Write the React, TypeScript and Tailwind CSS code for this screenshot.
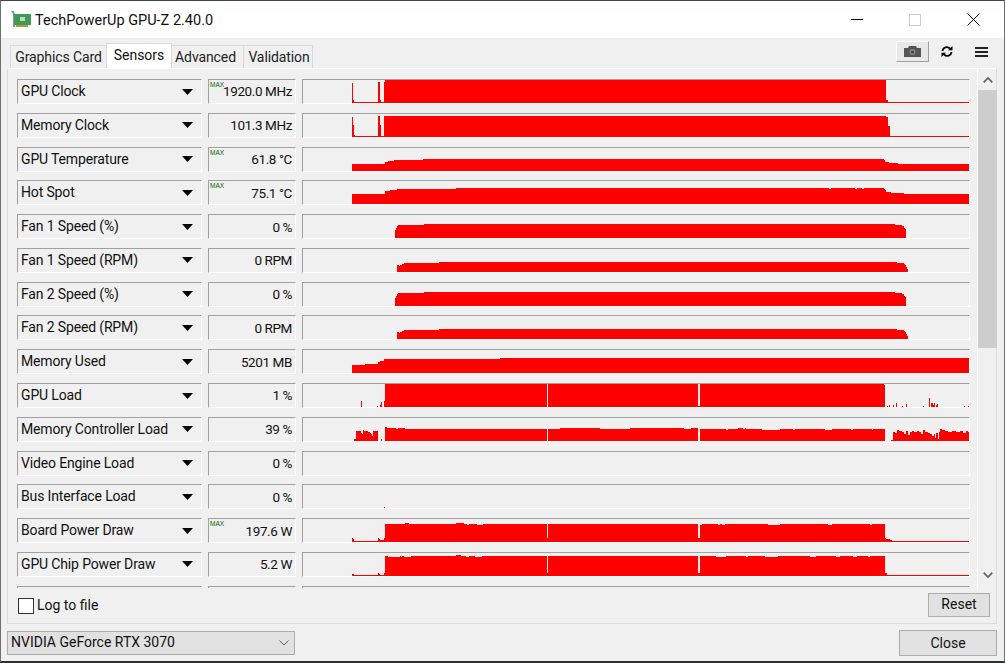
import React from 'react'

type Step = [number, number]

const PLOT_H = 23
const PLOT_LEFT = 302

const fanA: Step[] = [[395, 8], [396, 10], [397, 12], [398, 13], [424, 14], [895, 13], [902, 12], [904, 10], [905, 9], [906, 0]]
const fanB: Step[] = [[397, 7], [399, 6], [400, 7], [402, 8], [404, 9], [439, 10], [897, 9], [904, 8], [905, 7], [906, 5], [907, 3], [908, 0]]

const sensors: { name: string; value: string; max?: boolean; steps: Step[] }[] = [
  { name: 'GPU Clock', value: '1920.0 MHz', max: true, steps: [[352, 20], [353, 3], [354, 1], [378, 21], [380, 3], [381, 1], [384, 21], [385, 23], [886, 3], [888, 1], [969, 0]] },
  { name: 'Memory Clock', value: '101.3 MHz', steps: [[352, 20], [353, 12], [354, 2], [355, 1], [378, 21], [380, 12], [381, 1], [384, 21], [886, 20], [888, 11], [890, 1], [969, 0]] },
  { name: 'GPU Temperature', value: '61.8 °C', max: true, steps: [[352, 7], [385, 9], [388, 10], [394, 11], [423, 12], [884, 11], [885, 9], [889, 8], [898, 7], [969, 0]] },
  { name: 'Hot Spot', value: '75.1 °C', max: true, steps: [[352, 10], [385, 13], [390, 14], [397, 15], [456, 16], [829, 15], [831, 16], [855, 15], [857, 16], [862, 15], [864, 16], [884, 15], [885, 14], [886, 12], [891, 11], [904, 10], [969, 0]] },
  { name: 'Fan 1 Speed (%)', value: '0 %', steps: fanA },
  { name: 'Fan 1 Speed (RPM)', value: '0 RPM', steps: fanB },
  { name: 'Fan 2 Speed (%)', value: '0 %', steps: fanA },
  { name: 'Fan 2 Speed (RPM)', value: '0 RPM', steps: fanB },
  { name: 'Memory Used', value: '5201 MB', steps: [[352, 8], [365, 9], [378, 11], [380, 12], [384, 14], [500, 15], [969, 0]] },
  { name: 'GPU Load', value: '1 %', steps: [[361, 6], [362, 0], [377, 1], [378, 0], [380, 2], [381, 5], [382, 0], [384, 6], [385, 23], [547, 0], [548, 23], [698, 1], [700, 23], [884, 22], [885, 0], [887, 1], [888, 0], [889, 2], [890, 0], [893, 2], [894, 0], [896, 4], [897, 0], [902, 1], [903, 0], [906, 3], [907, 0], [923, 1], [924, 0], [929, 9], [930, 0], [931, 4], [933, 2], [934, 4], [935, 0], [936, 2], [937, 3], [938, 0], [964, 1], [965, 0], [968, 1], [969, 0]] },
  { name: 'Memory Controller Load', value: '39 %', steps: [[354, 2], [356, 10], [361, 8], [362, 7], [363, 11], [364, 10], [368, 9], [370, 8], [371, 7], [372, 5], [373, 10], [378, 0], [381, 2], [382, 0], [385, 14], [387, 13], [396, 12], [398, 13], [405, 12], [547, 0], [548, 12], [560, 13], [600, 12], [630, 13], [680, 13], [684, 12], [691, 13], [698, 0], [700, 12], [726, 11], [728, 12], [738, 13], [743, 12], [745, 13], [746, 12], [762, 11], [780, 12], [793, 11], [795, 12], [825, 11], [832, 12], [851, 11], [853, 12], [872, 11], [873, 12], [885, 0], [891, 1], [893, 9], [895, 8], [897, 11], [899, 10], [902, 9], [904, 7], [906, 10], [908, 6], [910, 9], [912, 10], [914, 9], [917, 10], [919, 9], [921, 7], [923, 11], [925, 9], [928, 8], [930, 7], [932, 5], [934, 7], [935, 3], [936, 8], [938, 2], [939, 9], [940, 12], [942, 11], [945, 10], [948, 9], [952, 10], [956, 9], [960, 10], [963, 8], [966, 10], [968, 9], [969, 0]] },
  { name: 'Video Engine Load', value: '0 %', steps: [] },
  { name: 'Bus Interface Load', value: '0 %', steps: [[384, 1], [385, 0]] },
  { name: 'Board Power Draw', value: '197.6 W', max: true, steps: [[352, 4], [353, 3], [354, 1], [378, 4], [379, 3], [380, 2], [384, 4], [385, 18], [405, 19], [409, 18], [456, 19], [464, 18], [467, 17], [469, 18], [477, 17], [483, 18], [547, 4], [548, 18], [698, 4], [700, 17], [702, 18], [718, 17], [720, 18], [722, 17], [725, 18], [768, 17], [780, 18], [828, 17], [832, 18], [870, 17], [872, 18], [885, 4], [886, 3], [890, 2], [892, 1], [969, 0]] },
  { name: 'GPU Chip Power Draw', value: '5.2 W', steps: [[352, 2], [354, 1], [378, 3], [379, 2], [380, 1], [384, 3], [385, 20], [388, 19], [400, 20], [401, 19], [402, 20], [404, 19], [411, 20], [456, 21], [461, 20], [466, 19], [469, 20], [475, 19], [482, 20], [547, 3], [548, 20], [698, 3], [700, 20], [716, 19], [726, 20], [746, 19], [748, 20], [765, 19], [778, 20], [810, 19], [816, 20], [836, 19], [840, 20], [853, 19], [857, 20], [868, 19], [870, 20], [885, 3], [887, 1], [969, 0]] },
  { name: '', value: '', steps: [] },
]

function plotPath(steps: Step[]) {
  let d = ''
  for (let i = 0; i < steps.length - 1; i++) {
    const [x, h] = steps[i]
    const w = steps[i + 1][0] - x
    if (h > 0) d += `M${x - PLOT_LEFT} ${PLOT_H - h}h${w}v${h}h-${w}z`
  }
  return d
}

function Graph({ steps }: { steps: Step[] }) {
  return (
    <div className="w-[668px] h-[25px] border-t border-l border-[#a0a0a0] border-b-white border-r-white border-b border-r bg-[#f0f0f0] shrink-0">
      <svg width={667} height={PLOT_H} viewBox={`1 0 667 ${PLOT_H}`} shapeRendering="crispEdges" className="block">
        <path d={plotPath(steps)} fill="#ff0000" />
      </svg>
    </div>
  )
}

function Arrow() {
  return (
    <svg width="11" height="6" viewBox="0 0 11 6" className="shrink-0">
      <path d="M0 0h11L5.5 6z" fill="#000" />
    </svg>
  )
}

function SensorRow({ name, value, max, steps }: { name: string; value: string; max?: boolean; steps: Step[] }) {
  return (
    <div className="flex h-[25px] shrink-0">
      <div className="w-[185px] h-[25px] border-t border-l border-[#a0a0a0] border-b-white border-r-white border-b border-r flex items-center justify-between pl-[3px] pr-[8px] text-[14px] tracking-[-0.15px] text-[#111]">
        <span>{name}</span>
        {name && <Arrow />}
      </div>
      <div className="relative ml-[6px] w-[88px] h-[25px] border-t border-l border-[#a0a0a0] border-b-white border-r-white border-b border-r flex items-center justify-end pr-[3px] text-[13.5px] tracking-[-0.4px] text-[#111]">
        {max && <span className="absolute left-[1px] top-[1px] text-[6.5px] leading-[7px] tracking-normal font-['Liberation_Sans'] text-[#006400]">MAX</span>}
        <span>{value}</span>
      </div>
      <div className="ml-[6px]">
        <Graph steps={steps} />
      </div>
    </div>
  )
}

function Tab({ label, active, className }: { label: string; active?: boolean; className: string }) {
  return (
    <div
      className={
        active
          ? `h-[25px] bg-white border border-b-0 border-[#d9d9d9] flex items-start justify-center pt-[1px] text-[14px] text-[#111] relative z-10 ${className}`
          : `h-[23px] bg-[#f0f0f0] border border-b-0 border-[#d9d9d9] -ml-px flex items-center justify-center text-[14px] tracking-[-0.1px] text-[#222] ${className}`
      }
    >
      {label}
    </div>
  )
}

export default function App() {
  return (
    <div className="w-[1005px] h-[663px] flex flex-col bg-[#f0f0f0] border-l border-r border-[#6f6f6f] border-t-[#3a4a44] border-t border-b-2 border-b-[#26332f] overflow-hidden font-['Roboto','Liberation_Sans',sans-serif]">
      {/* title bar */}
      <div className="h-[37px] bg-white flex items-center shrink-0">
        <svg width="20" height="17" viewBox="0 0 20 17" className="ml-[10px] shrink-0">
          <path d="M0 0h3l1 3v13H2V3z" fill="#8a9a90" />
          <rect x="3" y="3" width="17" height="11" fill="#3f9a55" />
          <rect x="9" y="6" width="5" height="4" fill="#c5d6c8" />
          <rect x="5" y="14" width="12" height="2" fill="#b09a40" />
        </svg>
        <span className="ml-[4px] pt-[2px] text-[14.5px] text-[#111]">TechPowerUp GPU-Z 2.40.0</span>
        <div className="ml-auto flex items-center">
          <div className="w-[12px] h-px bg-black" />
          <div className="ml-[46px] w-[12px] h-[12px] border border-[#cccccc]" />
          <svg width="13" height="13" viewBox="0 0 13 13" className="ml-[46px] mr-[24px]">
            <path d="M.5.5l12 12M12.5.5l-12 12" stroke="#000" strokeWidth="1" fill="none" />
          </svg>
        </div>
      </div>

      {/* tabs and tool icons */}
      <div className="h-[30px] flex items-end shrink-0">
        <div className="flex items-end pl-[9px]">
          <Tab label="Graphics Card" className="w-[97px] ml-0" />
          <Tab label="Sensors" active className="w-[66px] -ml-px" />
          <Tab label="Advanced" className="w-[73px] pr-[4px]" />
          <Tab label="Validation" className="w-[70px] pl-[2px]" />
        </div>
        <div className="ml-auto flex items-center self-start pt-[3px] pr-[16px]">
          <div className="w-[33px] h-[21px] border-t border-l border-white border-b border-r border-b-[#a0a0a0] border-r-[#a0a0a0] bg-[#e8e8e8] flex items-center justify-center">
            <svg width="17" height="11" viewBox="0 0 17 11">
              <path d="M0 2h4l1-2h7l1 2h4v9H0z" fill="#555" />
              <circle cx="8.5" cy="6" r="3" fill="#8a8a8a" />
              <circle cx="8.5" cy="6" r="1.6" fill="#444" />
            </svg>
          </div>
          <svg width="12" height="11" viewBox="0 0 12 11" className="ml-[12px]">
            <path d="M1.5 5a4.2 4.2 0 0 1 7.4-2.4M10.5 6a4.2 4.2 0 0 1-7.4 2.4" fill="none" stroke="#000" strokeWidth="1.8" />
            <path d="M7 4.2h4.5V0zM5 6.8H.5V11z" fill="#000" />
          </svg>
          <div className="ml-[22px] w-[13px] flex flex-col gap-[2px]">
            <div className="h-[2px] bg-[#222]" />
            <div className="h-[2px] bg-[#222]" />
            <div className="h-[2px] bg-[#222]" />
          </div>
        </div>
      </div>

      {/* sensors panel */}
      <div className="ml-[6px] w-[990px] h-[556px] border border-t-white border-[#dcdcdc] flex flex-col shrink-0">
        <div className="flex h-[519px] shrink-0">
          <div className="pl-[9px] pt-[10px] w-[969px] h-[519px] overflow-hidden flex flex-col gap-[8.79px] shrink-0">
            {sensors.map((s, i) => (
              <SensorRow key={i} {...s} />
            ))}
          </div>
          <div className="w-[20px] border-l border-white flex flex-col items-center shrink-0">
            <svg width="10" height="6" viewBox="0 0 10 6" className="mt-[8px] shrink-0">
              <path d="M.7 5.3L5 1l4.3 4.3" fill="none" stroke="#606060" strokeWidth="1.7" />
            </svg>
            <div className="mt-[7px] w-[19px] h-[258px] bg-[#cdcdcd] shrink-0" />
            <svg width="10" height="6" viewBox="0 0 10 6" className="mt-[224px] shrink-0">
              <path d="M.7.7L5 5l4.3-4.3" fill="none" stroke="#606060" strokeWidth="1.7" />
            </svg>
          </div>
        </div>
        <div className="flex items-center h-[35px] pl-[10px] pr-[6px]">
          <div className="w-[16px] h-[16px] border border-[#333] bg-white" />
          <span className="ml-[3px] text-[14px] text-[#111]">Log to file</span>
          <div className="ml-auto -mt-[2px] w-[62px] h-[24px] border border-[#adadad] bg-[#e1e1e1] flex items-center justify-center text-[14px] text-[#111]">Reset</div>
        </div>
      </div>

      {/* card selector and close */}
      <div className="flex items-center flex-1 pl-[6px] pr-[7px]">
        <div className="w-[288px] h-[24px] border border-[#adadad] bg-[#e1e1e1] flex items-center justify-between pl-[3px] pr-[5px] text-[14px] text-[#111]">
          <span>NVIDIA GeForce RTX 3070</span>
          <svg width="10" height="6" viewBox="0 0 10 6">
            <path d="M.5.5L5 5 9.5.5" fill="none" stroke="#606060" strokeWidth="1" />
          </svg>
        </div>
        <div className="ml-auto w-[98px] h-[26px] pt-[2px] border border-[#adadad] bg-[#e1e1e1] flex items-center justify-center text-[14px] text-[#111]">Close</div>
      </div>
    </div>
  )
}
